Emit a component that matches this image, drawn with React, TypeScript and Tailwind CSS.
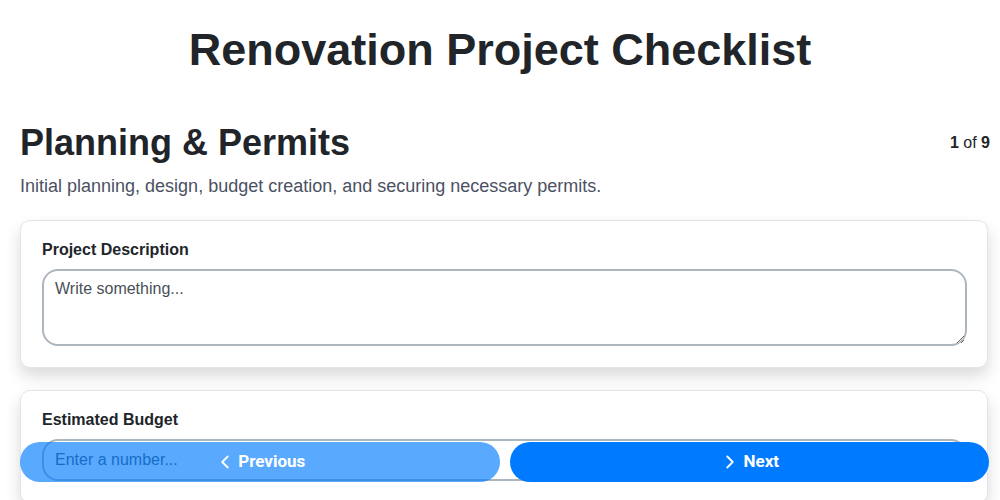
import { ChevronLeft, ChevronRight } from "lucide-react";

const FONT = "font-['Liberation_Sans',Arial,sans-serif]";

export default function App() {
  return (
    <div className={`h-screen overflow-hidden bg-white text-[#212529] ${FONT}`}>
      <h1 className="pt-[23px] text-center text-[45px] font-bold leading-[54px]">Renovation Project Checklist</h1>

      <div className="pl-5 pr-[10px]">
        <div className="mt-[44px] flex items-center justify-between">
          <h2 className="text-[36px] font-bold leading-[43px]">Planning &amp; Permits</h2>
          <span className="text-[16px]">
            <b>1</b> of <b>9</b>
          </span>
        </div>
        <p className="mt-[10px] text-[18px] leading-[24px] text-[#4b5162]">
          Initial planning, design, budget creation, and securing necessary permits.
        </p>

        <div className="mt-[22px] flex flex-col gap-[22px] pr-[2px]">
          <div className="rounded-[10px] border border-[#e3e5ea] bg-white pl-[21px] pr-[20px] pt-[20px] pb-[21px] shadow-[0_8px_16px_rgba(0,0,0,0.15)]">
            <label className="block text-[16px] font-bold leading-[18px]">Project Description</label>
            <textarea
              placeholder="Write something..."
              className="mt-[10px] block h-[77px] w-full rounded-[16px] border-2 border-[#adb5bd] px-[11px] py-[8px] text-[16px] leading-[20px] outline-none placeholder:text-[#495057]"
            />
          </div>

          <div className="rounded-[10px] border border-[#e3e5ea] bg-white pl-[21px] pr-[20px] pt-[20px] pb-[21px] shadow-[0_8px_16px_rgba(0,0,0,0.15)]">
            <label className="block text-[16px] font-bold leading-[18px]">Estimated Budget</label>
            <input
              type="text"
              placeholder="Enter a number..."
              className="mt-[10px] block h-[42px] w-full rounded-[16px] border-2 border-[#adb5bd] px-[11px] text-[16px] outline-none placeholder:text-[#495057]"
            />
          </div>
        </div>
      </div>

      <div className="fixed inset-x-0 bottom-[18px] flex gap-[10px] pl-5 pr-[11px] font-['Roboto',sans-serif]">
        <button className="flex h-[40px] flex-1 items-center justify-center gap-[2px] rounded-full bg-[#007bff] text-[17px] font-bold text-white opacity-65">
          <ChevronLeft size={22} strokeWidth={2} />
          Previous
        </button>
        <button className="flex h-[40px] flex-1 items-center justify-center gap-[2px] rounded-full bg-[#007bff] text-[17px] font-bold text-white">
          <ChevronRight size={22} strokeWidth={2} />
          Next
        </button>
      </div>
    </div>
  );
}
